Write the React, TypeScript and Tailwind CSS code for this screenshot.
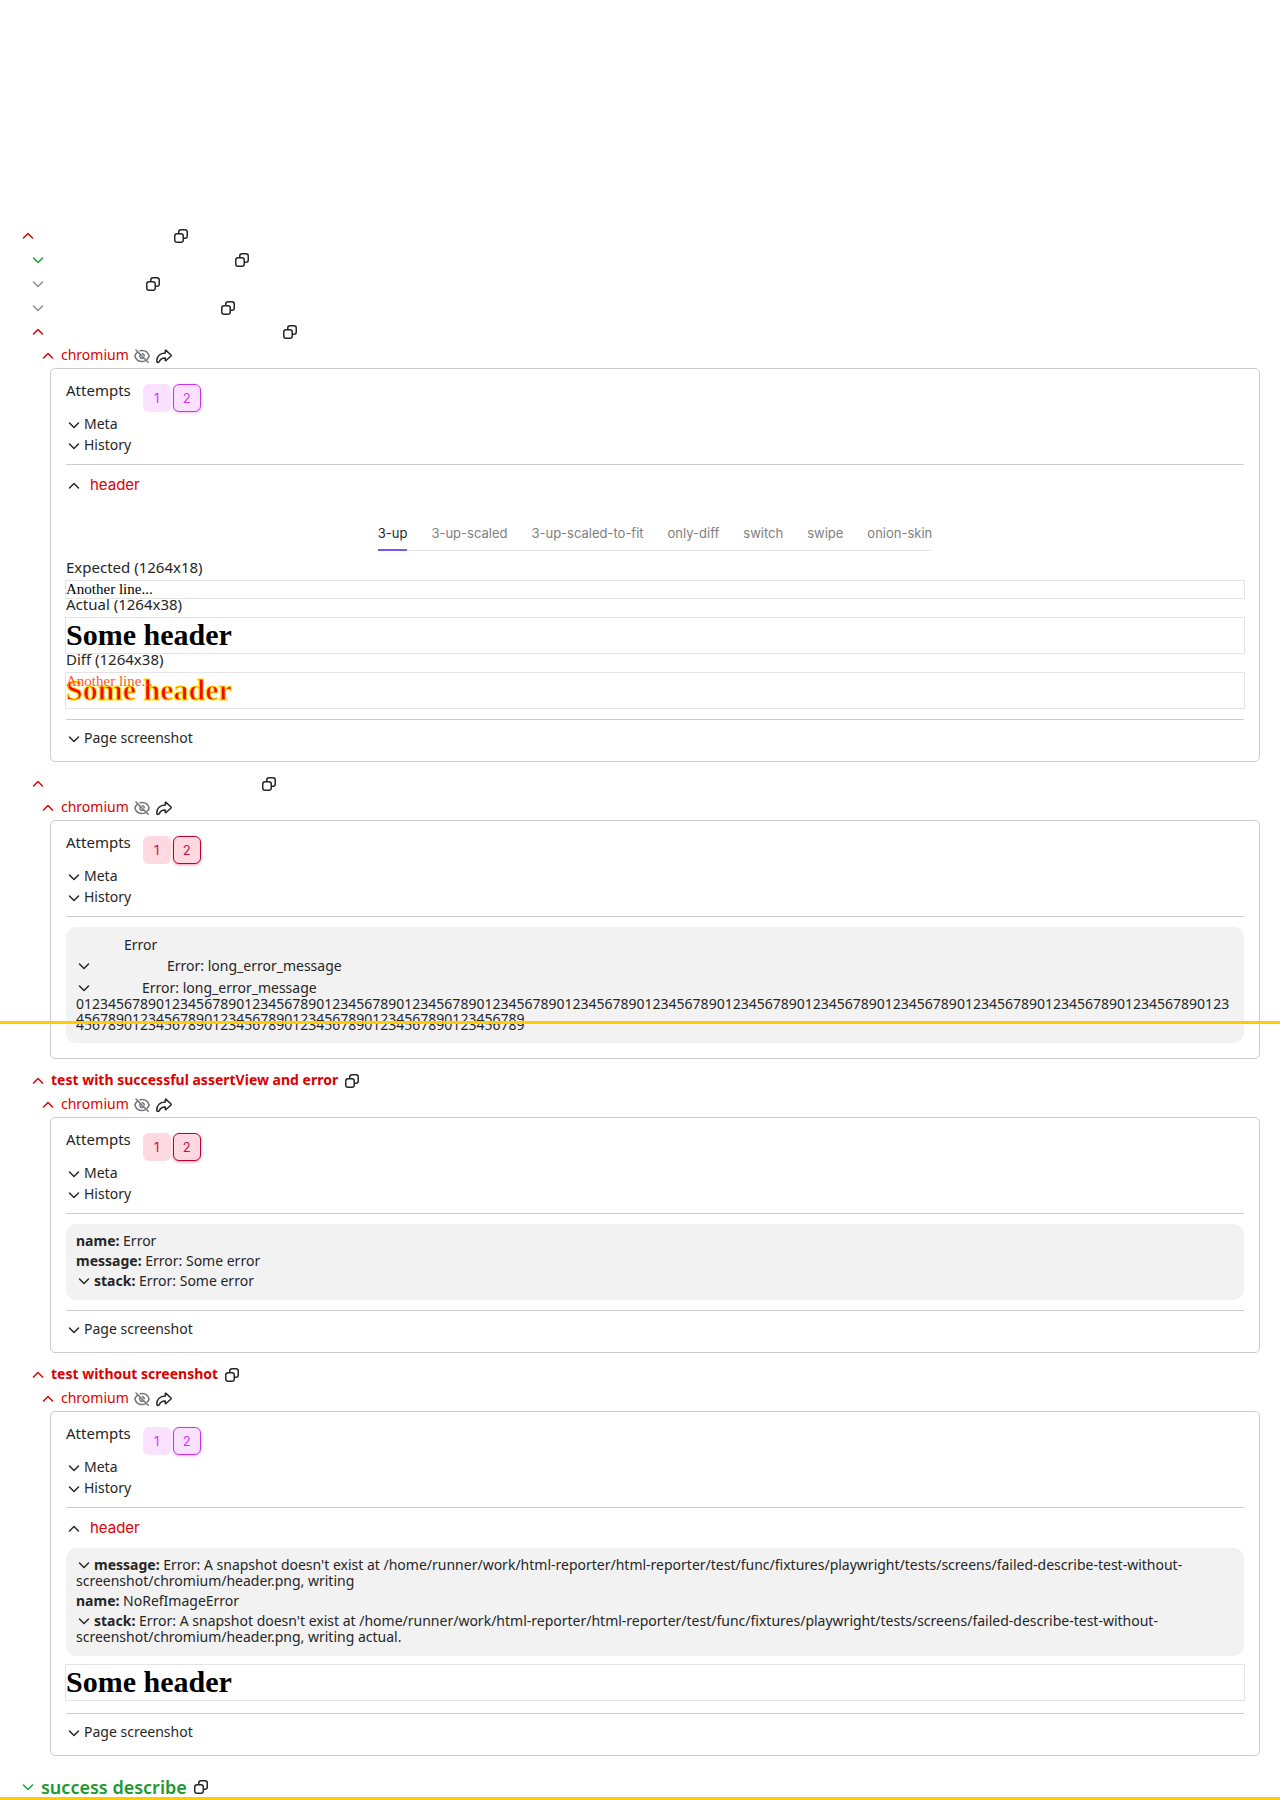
import type { ReactNode } from "react";

const CHEVRON =
  "M2.97 5.47a.75.75 0 0 1 1.06 0L8 9.44l3.97-3.97a.75.75 0 1 1 1.06 1.06l-4.5 4.5a.75.75 0 0 1-1.06 0l-4.5-4.5a.75.75 0 0 1 0-1.06";
const COPY =
  "M12 2.5H8A1.5 1.5 0 0 0 6.5 4v1H8a3 3 0 0 1 3 3v1.5h1A1.5 1.5 0 0 0 13.5 8V4A1.5 1.5 0 0 0 12 2.5M11 11h1a3 3 0 0 0 3-3V4a3 3 0 0 0-3-3H8a3 3 0 0 0-3 3v1H4a3 3 0 0 0-3 3v4a3 3 0 0 0 3 3h4a3 3 0 0 0 3-3zM4 6.5h4A1.5 1.5 0 0 1 9.5 8v4A1.5 1.5 0 0 1 8 13.5H4A1.5 1.5 0 0 1 2.5 12V8A1.5 1.5 0 0 1 4 6.5";

function Chevron({ up = false }: { up?: boolean }) {
  return (
    <svg viewBox="0 0 16 16" fill="currentColor" aria-hidden="true" className={up ? "size-4 shrink-0 rotate-180" : "size-4 shrink-0"}>
      <path fillRule="evenodd" d={CHEVRON} />
    </svg>
  );
}

function CopyButton() {
  return (
    <button type="button" aria-label="Copy to clipboard" className="size-4 shrink-0 text-[#262626]">
      <svg viewBox="0 0 16 16" fill="currentColor" className="size-4">
        <path fillRule="evenodd" d={COPY} />
      </svg>
    </button>
  );
}

function EyeSlashIcon() {
  return (
    <svg viewBox="0 0 16 16" fill="none" stroke="currentColor" strokeWidth="1.5" strokeLinecap="round" className="size-4">
      <path d="M2 2l12.200 12.200" />
      <path d="M3.400 4.300C2.100 5.200 1.200 6.500.9 8c.9 3.200 3.800 5.500 7.100 5.500 1.100 0 2.200-.2 3.200-.7" />
      <path d="M6.200 2.800C6.800 2.600 7.400 2.500 8 2.500c3.300 0 6.200 2.300 7.100 5.500-.3 1.300-1 2.400-2 3.300" />
      <path d="M6.100 6.700a2.300 2.300 0 0 0 3.200 3.200" />
      <path d="M8.300 5.700a2.300 2.300 0 0 1 2 2" />
    </svg>
  );
}

function ShareIcon() {
  return (
    <svg viewBox="0 0 16 16" fill="none" stroke="currentColor" strokeWidth="1.5" strokeLinejoin="round" className="size-4">
      <path d="M9.300 5V2.700c0-.4.4-.6.7-.35l5 4.700c.3.300.3.700 0 1l-5 4.500c-.3.250-.7.050-.7-.35V10c-2.800-.1-4.700.7-5.700 3.100-.3.700-.9 1.300-1.700 1.300-.7 0-1.100-.5-1.100-1.200C.8 8.400 3.900 5.100 9.300 5z" />
    </svg>
  );
}

type Tone = "red" | "green" | "gray";
const toneClass: Record<Tone, string> = {
  red: "text-[#dc0000]",
  green: "text-[#1a9a32]",
  gray: "text-[#8c8c8c]",
};

function TitleRow({ tone, up = false, indent, title, blank, large = false }: {
  tone: Tone; up?: boolean; indent: string; title?: string; blank?: string; large?: boolean;
}) {
  return (
    <div className={`flex items-center ${large ? "h-[21px]" : "h-6"} ${indent} ${toneClass[tone]}`}>
      <button type="button" aria-label={title ? undefined : "Toggle"} className="flex items-center gap-[5px]">
        <Chevron up={up} />
        {title ? (
          <span className={large ? "text-[18px] leading-5 font-semibold" : "pb-0.5 text-[14px] leading-4 font-bold"}>{title}</span>
        ) : (
          <span className={blank} />
        )}
      </button>
      <span className="ml-1.5 flex"><CopyButton /></span>
    </div>
  );
}

function BrowserRow() {
  return (
    <div className="flex h-6 items-center pl-10">
      <button type="button" className="flex items-center gap-[5px] text-[#dc0000]">
        <Chevron up />
        <span className="pb-0.5 text-[14px] leading-4">chromium</span>
      </button>
      <button type="button" aria-label="Hide" className="ml-[5px] text-[#757575]"><EyeSlashIcon /></button>
      <button type="button" aria-label="Open" className="ml-1.5"><ShareIcon /></button>
    </div>
  );
}

function Toggle({ children }: { children: ReactNode }) {
  return (
    <button type="button" className="flex h-[21px] items-center gap-0.5 text-[14px] leading-4">
      <Chevron />
      <span className="pb-0.5">{children}</span>
    </button>
  );
}

function Card({ kind, children }: { kind: "pink" | "purple"; children: ReactNode }) {
  const base = "h-7 w-7 rounded-[6px] font-['Inter',sans-serif] text-[13px] leading-none ";
  const plain = kind === "pink" ? "bg-[#ffd9e1] text-[#cc0d40]" : "bg-[#fae1ff] text-[#d633ff]";
  const active = kind === "pink" ? "border border-[#bd0032] shadow-[0_1px_3px_#bd003266]" : "border border-[#cb33f0] shadow-[0_1px_3px_#cb33f055]";
  return (
    <section className="mr-5 ml-[50px] rounded-[5px] border border-[#ccc] px-[15px] pt-[15px]">
      <div className="flex h-[30px] gap-3">
        <span className="text-[15px] leading-[12px]">Attempts</span>
        <div className="flex gap-0.5">
          <button type="button" className={`${base}${plain}`}>1</button>
          <button type="button" className={`${base}${plain} ${active}`}>2</button>
        </div>
      </div>
      <div className="flex flex-col items-start">
        <Toggle>Meta</Toggle>
        <Toggle>History</Toggle>
      </div>
      <hr className="mt-2 border-[#ccc]" />
      {children}
    </section>
  );
}

function PageScreenshot() {
  return (
    <>
      <hr className="border-[#ccc]" />
      <div className="pt-2 pb-3"><Toggle>Page screenshot</Toggle></div>
    </>
  );
}

function StateTitle() {
  return (
    <button type="button" className="mt-2.5 flex h-[21px] items-center gap-2">
      <Chevron up />
      <span className="pb-0.5 font-['Inter',sans-serif] text-[15px] leading-4 text-[#dc0000]">header</span>
    </button>
  );
}

function Fields({ children, after }: { children: ReactNode; after: string }) {
  return <div className={`flex flex-col gap-1 rounded-[10px] bg-[#f2f2f2] px-2.5 pt-[9px] pb-[11px] text-[14px] leading-4 ${after}`}>{children}</div>;
}

function Field({ name, children, chevron = false }: { name: string; children: ReactNode; chevron?: boolean }) {
  return (
    <div>
      {chevron && (
        <button type="button" aria-label={`Expand ${name}`} className="mr-0.5 inline-flex h-4 align-top"><Chevron /></button>
      )}
      <b>{name}:</b> {children}
    </div>
  );
}

const tabs = ["3-up", "3-up-scaled", "3-up-scaled-to-fit", "only-diff", "switch", "swipe", "onion-skin"];
const digits = "0123456789".repeat(20);
const shot = "-mx-px overflow-hidden border border-[#e4e4e4] font-['Liberation_Serif',serif] text-black";
const shotHeading = "pb-0.5 text-[30px] leading-[33px] font-bold";
const errorPath = "Error: A snapshot doesn't exist at /home/runner/work/html-reporter/html-reporter/test/func/fixtures/playwright/tests/screens/failed-describe-test-without-screenshot/chromium/header.png, writing";

export default function App() {
  return (
    <main className="bg-white pt-56 font-['Noto_Sans',sans-serif] text-[15px] text-[#262626]">
      <TitleRow tone="red" up indent="pl-5" blank="w-[126px]" />
      <TitleRow tone="green" indent="pl-[30px]" blank="w-[177px]" />
      <TitleRow tone="gray" indent="pl-[30px]" blank="w-[88px]" />
      <TitleRow tone="gray" indent="pl-[30px]" blank="w-[163px]" />
      <TitleRow tone="red" up indent="pl-[30px]" blank="w-[225px]" />

      <BrowserRow />
      <Card kind="purple">
        <StateTitle />
        <div className="mt-[23px] flex justify-center">
          <div role="tablist" className="flex gap-6 font-['Inter',sans-serif] text-[13px] leading-[18px] text-[#808080] shadow-[inset_0_-1px_0_#e5e5e5]">
            {tabs.map((t, i) => (
              <button key={t} type="button" role="tab" aria-selected={i === 0}
                className={i === 0 ? "h-8 border-b-2 border-[#7656ff] pb-0.5 text-[#262626]" : "h-8 pb-1"}>
                {t}
              </button>
            ))}
          </div>
        </div>
        <div className="mt-2 leading-4">Expected (1264x18)</div>
        <div className={`mt-[5px] ${shot}`}><div className="text-[15px] leading-[17px]">Another line...</div></div>
        <div className="mb-2 leading-[10px]">Actual (1264x38)</div>
        <div className={shot}><div className={shotHeading}>Some header</div></div>
        <div className="mb-2 leading-[10px]">Diff (1264x38)</div>
        <div className={`relative mb-2.5 ${shot}`}>
          <div className={`${shotHeading} text-[#ff0000] [-webkit-text-stroke:1px_#ffe800]`}>Some header</div>
          <div className="absolute top-0 left-0 text-[15px] leading-[17px] text-[#ff5a1f]">Another line...</div>
        </div>
        <PageScreenshot />
      </Card>

      <div className="h-2.5" />
      <TitleRow tone="red" up indent="pl-[30px]" blank="w-[204px]" />
      <BrowserRow />
      <Card kind="pink">
        <div className="mt-2.5 mb-[15px] rounded-[10px] bg-[#f2f2f2] px-2.5 pt-2 pb-[13px] text-[14px]">
          <div className="pl-12 leading-5">Error</div>
          <div className="flex h-[22px] items-center">
            <Chevron /><span className="pl-[75px] leading-5">Error: long_error_message</span>
          </div>
          <div className="flex h-[21px] items-center">
            <Chevron /><span className="pl-[50px] leading-5">Error: long_error_message</span>
          </div>
          <div className="-mt-0.5 h-[25px] overflow-hidden leading-[15px] break-all">{digits}</div>
          <div className="-mr-[46px] -ml-[76px] h-[3px] bg-[#ffcc00]" />
          <div aria-hidden="true" className="flex h-[6px] flex-col justify-end overflow-hidden leading-[10px]">
            {digits.slice(144)}
          </div>
        </div>
      </Card>

      <div className="h-2.5" />
      <TitleRow tone="red" up indent="pl-[30px]" title="test with successful assertView and error" />
      <BrowserRow />
      <Card kind="pink">
        <Fields after="my-2.5">
          <Field name="name">Error</Field>
          <Field name="message">Error: Some error</Field>
          <Field name="stack" chevron>Error: Some error</Field>
        </Fields>
        <PageScreenshot />
      </Card>

      <div className="h-2.5" />
      <TitleRow tone="red" up indent="pl-[30px]" title="test without screenshot" />
      <BrowserRow />
      <Card kind="purple">
        <StateTitle />
        <Fields after="mt-[9px] mb-2">
          <Field name="message" chevron>{errorPath}</Field>
          <Field name="name">NoRefImageError</Field>
          <Field name="stack" chevron>{errorPath} actual.</Field>
        </Fields>
        <div className={`mb-3 ${shot}`}><div className={shotHeading}>Some header</div></div>
        <PageScreenshot />
      </Card>

      <div className="h-5" />
      <TitleRow tone="green" indent="pl-5" title="success describe" large />
      <div className="h-[3px] bg-[#ffcc00]" />
    </main>
  );
}
